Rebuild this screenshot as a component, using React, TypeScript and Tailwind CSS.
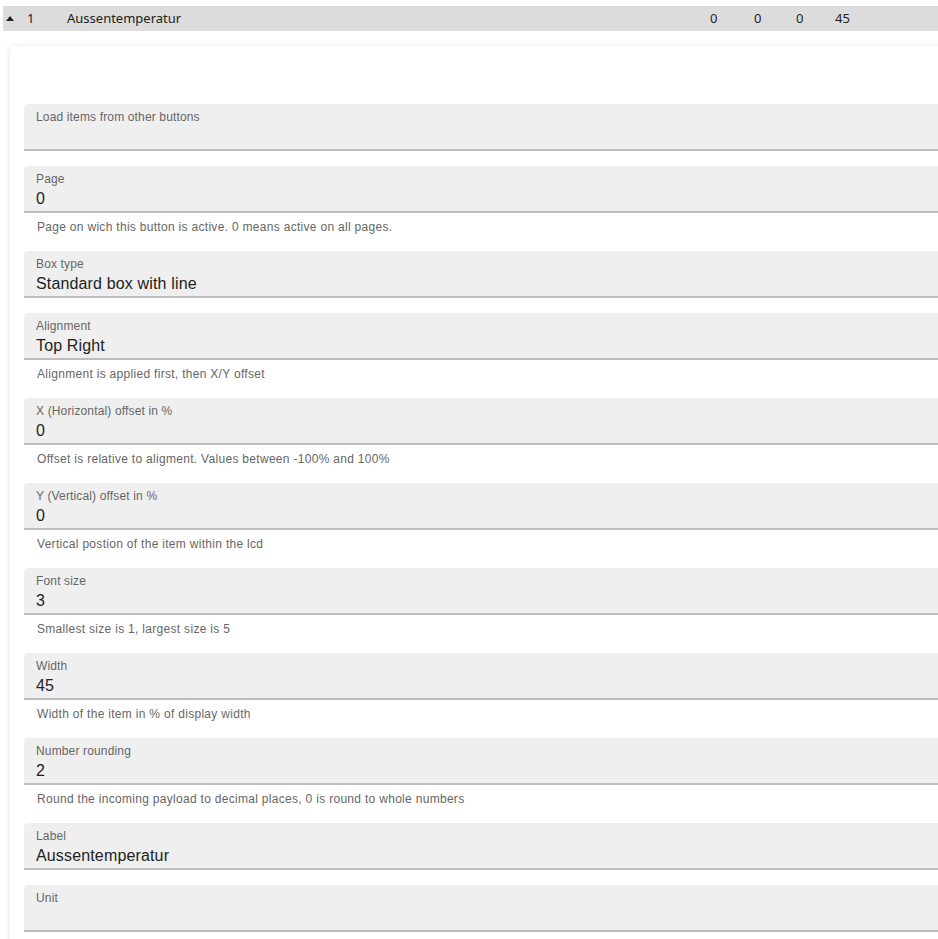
import React from 'react';

type Field = { label: string; value?: string; help?: string };

const fields: Field[] = [
  { label: 'Load items from other buttons' },
  { label: 'Page', value: '0', help: 'Page on wich this button is active. 0 means active on all pages.' },
  { label: 'Box type', value: 'Standard box with line' },
  { label: 'Alignment', value: 'Top Right', help: 'Alignment is applied first, then X/Y offset' },
  { label: 'X (Horizontal) offset in %', value: '0', help: 'Offset is relative to aligment. Values between -100% and 100%' },
  { label: 'Y (Vertical) offset in %', value: '0', help: 'Vertical postion of the item within the lcd' },
  { label: 'Font size', value: '3', help: 'Smallest size is 1, largest size is 5' },
  { label: 'Width', value: '45', help: 'Width of the item in % of display width' },
  { label: 'Number rounding', value: '2', help: 'Round the incoming payload to decimal places, 0 is round to whole numbers' },
  { label: 'Label', value: 'Aussentemperatur' },
  { label: 'Unit' },
];

function TextField({ label, value, help }: Field) {
  return (
    <div className="mb-[15px]">
      <div className="h-[47px] rounded-t-[4px] border-b-2 border-[#bdbdbd] bg-[#efefef] px-[12px] pt-[5px] tracking-[0.15px]">
        <div className="text-[12px] leading-[16px] text-[#666]">{label}</div>
        <div className="mt-[2px] text-[16px] leading-[20px] text-[#222]">{value ?? '\u00a0'}</div>
      </div>
      {help && <div className="mt-[7px] pb-[1px] pl-[13px] text-[12px] leading-[15px] tracking-[0.3px] text-[#666]">{help}</div>}
    </div>
  );
}

export default function App() {
  return (
    <div className="h-[939px] w-[938px] overflow-hidden bg-white" style={{ fontFamily: '"Liberation Sans", Arial, sans-serif' }}>
      <div
        className="ml-[3px] mt-[6px] flex h-[25px] items-center bg-[#dcdcdc] text-[13px] text-[#222]"
        style={{ fontFamily: '"Noto Sans", sans-serif' }}
      >
        <svg width="8" height="5" viewBox="0 0 8 5" className="ml-[3px]">
          <path d="M0 5 L4 0 L8 5 Z" fill="#222" />
        </svg>
        <span className="ml-[13px] w-[40px]">1</span>
        <span className="flex-1">Aussentemperatur</span>
        <span className="w-[44px]">0</span>
        <span className="w-[42px]">0</span>
        <span className="w-[39px]">0</span>
        <span className="w-[103px]">45</span>
      </div>
      <div className="ml-[10px] mt-[15px] min-h-[900px] w-[960px] bg-white px-[14px] pt-[58px] shadow-[0_1px_6px_rgba(0,0,0,0.12)]">
        {fields.map((f) => (
          <TextField key={f.label} {...f} />
        ))}
      </div>
    </div>
  );
}
